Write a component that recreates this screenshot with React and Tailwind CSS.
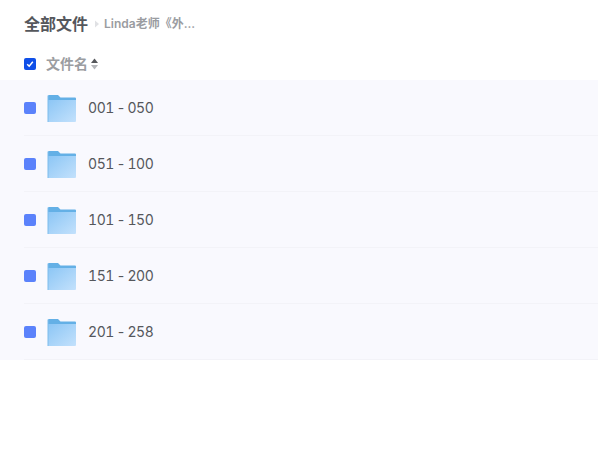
const folders = ['001 - 050', '051 - 100', '101 - 150', '151 - 200', '201 - 258'];

function FolderIcon() {
  return (
    <svg width="30" height="28" viewBox="0 0 30 28" className="shrink-0">
      <defs>
        <linearGradient id="folderFront" x1="0" y1="0" x2="1" y2="1">
          <stop offset="0" stopColor="#8cc6f5" />
          <stop offset="1" stopColor="#c3e1fc" />
        </linearGradient>
      </defs>
      <path d="M1 2a1 1 0 0 1 1-1h9l2.500 2.500H28a1 1 0 0 1 1 1V8H1z" fill="#64b0e6" />
      <path d="M1 6h28v21a1 1 0 0 1-1 1H1z" fill="url(#folderFront)" />
      <path d="M1 1.500V28" stroke="#7dbcec" strokeWidth="1" />
    </svg>
  );
}

export default function App() {
  return (
    <div className="h-[457px] w-[598px] overflow-hidden bg-white font-['Inter','Noto_Sans_CJK_SC',sans-serif]">
      <div className="flex h-12 items-center pl-6">
        <span className="text-base font-semibold text-[#55575c]">全部文件</span>
        <svg width="6" height="8" viewBox="0 0 6 8" className="ml-1.5">
          <path d="M1 0.500L5 4L1 7.500z" fill="#e0e1e4" />
        </svg>
        <span className="ml-1 text-xs font-semibold text-[#9a9ca1]">Linda老师《外...</span>
      </div>

      <div className="flex h-8 items-center pl-6">
        <span className="flex h-3 w-3 items-center justify-center rounded-[2px] bg-[#0f4fe8]">
          <svg width="8" height="8" viewBox="0 0 8 8">
            <path d="M1.200 4.200L3.200 6.200L6.800 1.800" fill="none" stroke="#fff" strokeWidth="1.500" />
          </svg>
        </span>
        <span className="ml-2.5 text-sm font-semibold text-[#9b9da1]">文件名</span>
        <svg width="7" height="12" viewBox="0 0 7 12" className="ml-[3px]">
          <path d="M3.500 0.500L7 5H0z" fill="#55575b" />
          <path d="M3.500 11.500L0 7H7z" fill="#b4b6ba" />
        </svg>
      </div>

      <div className="bg-[#f9f9fe]">
        {folders.map((name) => (
          <div key={name} className="pl-6">
            <div className="flex h-14 items-center border-b border-[#f3f3f8]">
              <span className="h-3 w-3 rounded-[2px] bg-[#5b82fb]" />
              <span className="ml-[11px]">
                <FolderIcon />
              </span>
              <span className="ml-[11px] text-sm tracking-[-0.4px] [word-spacing:-1px] text-[#55575c] tabular-nums">{name}</span>
            </div>
          </div>
        ))}
      </div>
    </div>
  );
}
